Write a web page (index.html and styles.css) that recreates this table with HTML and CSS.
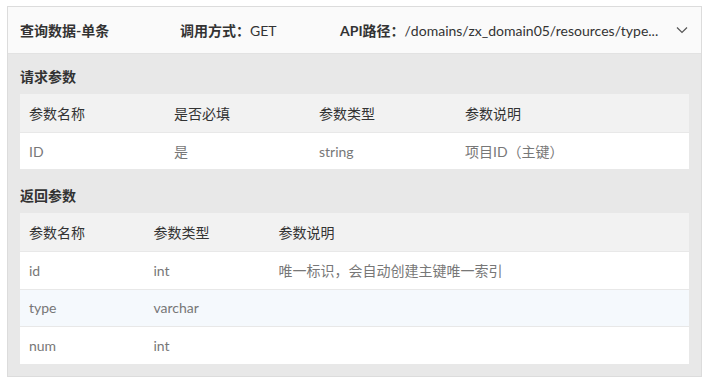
FILE: index.html
```html
<!DOCTYPE html>
<html lang="zh-CN">
<head>
<meta charset="utf-8">
<link rel="stylesheet" href="styles.css">
</head>
<body>
<div class="card">
  <div class="card-head">
    <div class="h-title">查询数据-单条</div>
    <div class="h-method"><b>调用方式：</b>GET</div>
    <div class="h-path"><b>API路径：</b>/domains/zx_domain05/resources/type...</div>
    <svg class="chev" width="12" height="8" viewBox="0 0 12 8"><path d="M1 1.5 L6 6.5 L11 1.5" fill="none" stroke="#555" stroke-width="1.2"/></svg>
  </div>
  <div class="card-body">
    <div class="sec-title">请求参数</div>
    <div class="tbl tbl-req">
      <div class="row head"><span>参数名称</span><span>是否必填</span><span>参数类型</span><span>参数说明</span></div>
      <div class="row"><span>ID</span><span>是</span><span>string</span><span>项目ID（主键）</span></div>
    </div>
    <div class="sec-title">返回参数</div>
    <div class="tbl tbl-res">
      <div class="row head"><span>参数名称</span><span>参数类型</span><span>参数说明</span></div>
      <div class="row"><span>id</span><span>int</span><span>唯一标识，会自动创建主键唯一索引</span></div>
      <div class="row hover"><span>type</span><span>varchar</span><span></span></div>
      <div class="row"><span>num</span><span>int</span><span></span></div>
    </div>
  </div>
</div>
</body>
</html>
```
FILE: styles.css
```css
* { box-sizing: border-box; }
body {
  margin: 0;
  padding: 6px 7px 0 7px;
  background: #fff;
  font-family: Lato, "Noto Sans CJK SC", sans-serif;
  font-size: 14px;
  color: #333;
}
.card {
  width: 695px;
  border: 1px solid #dcdcdc;
}
.card-head {
  height: 47px;
  background: #fafafa;
  border-bottom: 1px solid #e2e2e2;
  display: flex;
  align-items: center;
  padding: 0 0 0 12px;
  color: #333;
}
.card-head b { font-weight: 700; }
.h-title { width: 160px; font-weight: 700; }
.h-method { width: 160px; }
.h-path { flex: 1; }
.chev { margin-right: 13px; }
.card-body {
  background: #e8e8e8;
  padding: 13px 12px 12px 12px;
}
.sec-title {
  height: 20px;
  line-height: 20px;
  font-weight: 700;
  margin-bottom: 7px;
}
.tbl { background: #fff; }
.tbl-req { margin-bottom: 17px; }
.row {
  display: grid;
  height: 37.67px;
  align-items: center;
  border-top: 1px solid #e8e8e8;
  color: #777;
}
.row.head {
  background: #f2f2f2;
  color: #333;
  border-top: 0;
  height: 38px;
}
.row.hover { background: #f5f9fd; }
.tbl-req .row { grid-template-columns: 145px 145px 146px 1fr; }
.tbl-req .row:not(.head) { height: 37px; }
.tbl-res .row { grid-template-columns: 124.5px 125px 1fr; }
.row span { padding-left: 9px; white-space: nowrap; }
```
